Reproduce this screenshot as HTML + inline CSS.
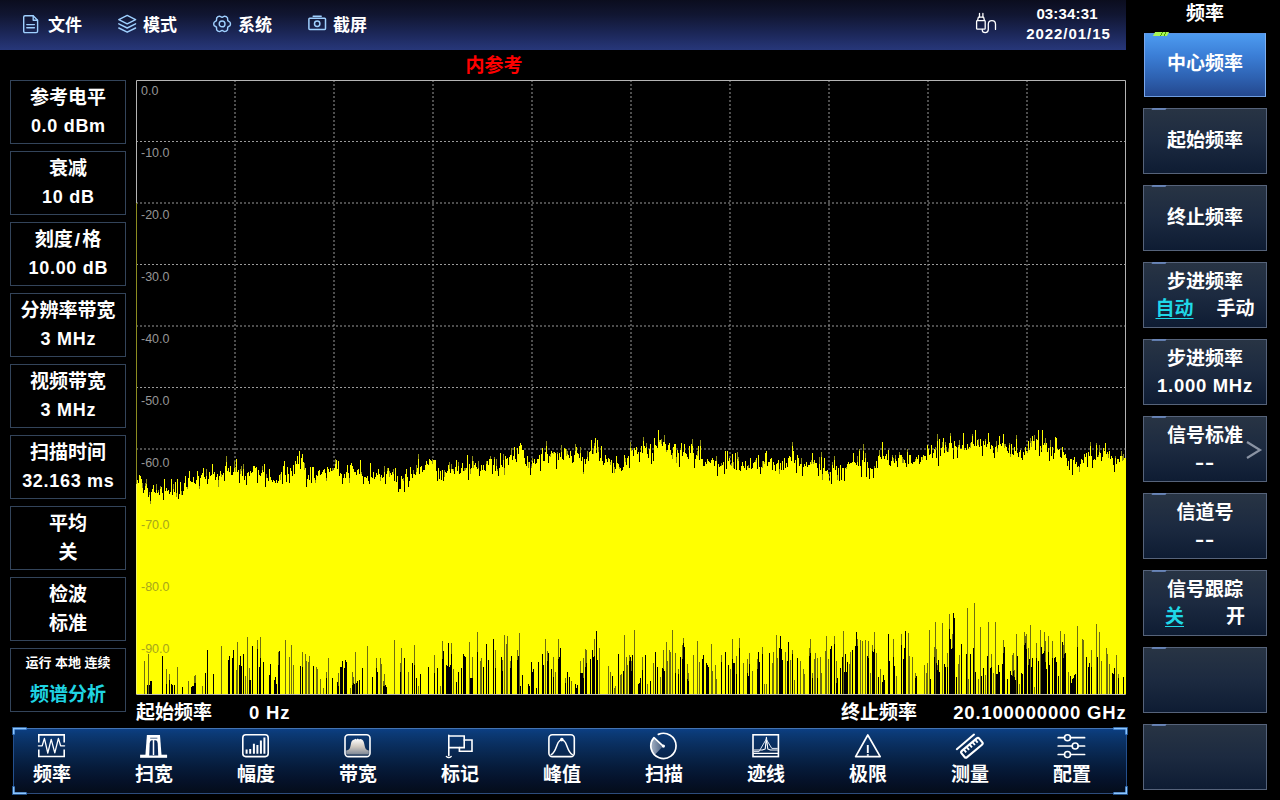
<!DOCTYPE html>
<html lang="zh-CN">
<head>
<meta charset="utf-8">
<title>频谱分析</title>
<style>
*{box-sizing:border-box;margin:0;padding:0}
html,body{width:1280px;height:800px;overflow:hidden;background:#000}
body{position:relative;font-family:"Liberation Sans","Noto Sans CJK SC",sans-serif;color:#fff;font-weight:700}
.abs{position:absolute}
/* top bar */
#topbar{position:absolute;left:0;top:0;width:1126px;height:50px;background:linear-gradient(180deg,#0b0d1e 0%,#111632 30%,#1b2656 65%,#27377a 100%)}
.menu{position:absolute;top:0;height:50px;line-height:52px;font-size:17px;font-weight:700;white-space:nowrap}
.menu svg{position:absolute;top:0;left:0}
#clock{position:absolute;left:1008px;width:120px;top:4px;text-align:center;font-size:15px;line-height:20px;font-weight:700}
#ref{position:absolute;left:434px;width:120px;top:54px;text-align:center;color:#f00;font-size:19px;line-height:24px;font-weight:700}
/* left info */
.info{position:absolute;left:10px;width:116px;height:64px;border:1px solid #33445a;text-align:center;font-size:19px;line-height:29px;padding-top:2px;white-space:nowrap}
.l{font-size:18px;letter-spacing:.7px;padding-left:.7px}
/* right panel */
#rtitle{position:absolute;left:1143px;width:124px;top:1px;height:26px;line-height:26px;text-align:center;font-size:19px}
.rb{position:absolute;left:1143px;width:124px;height:66px;border:1px solid #56637a;background:linear-gradient(180deg,#283444 0%,#1c2a40 50%,#0e1c33 100%);text-align:center;font-size:19px;line-height:27px;white-space:nowrap}
.rb.one{line-height:64px}
.rb.two{padding-top:6px;line-height:26.5px}
.rb.act{left:1144px;width:122px;height:64px;margin-top:2px;line-height:59px;background:linear-gradient(180deg,#4d9bf0 0%,#3b7ed6 35%,#2e62b2 70%,#24488e 100%);border-color:#5a94e6 #7fb0f0 #6e9ce0 #7aa8ee}
.rb i{position:absolute;left:8px;top:-1px;width:14px;height:2px;background:#6f8fc8;transform:skewX(-30deg);opacity:.8}
.rb.act i{left:9px;width:14px;height:4px;top:-2px;opacity:1;background:linear-gradient(90deg,#a8f555 0,#a8f555 7px,#4da000 7px,#4da000 8px,#a8f555 8px,#a8f555 10.5px,#4da000 10.5px,#4da000 11.5px,#a8f555 11.5px)}
.cy{color:#1fd8e8;text-decoration:underline;text-underline-offset:3px}
/* bottom */
#bbar{position:absolute;left:13px;top:728px;width:1114px;height:66px;background:linear-gradient(180deg,#0c3f84 0%,#0b3a76 7%,#0a3062 22%,#08254c 42%,#061b3a 60%,#05122a 80%,#040c1a 100%);border-top:1px solid #4474b2;border-bottom:1px solid #2d4c7c}
.bi{position:absolute;top:0;width:102px;height:66px;text-align:center;font-size:19px}
.bi span{position:absolute;left:0;width:100%;top:35px;line-height:26px}
.bi svg{position:absolute;left:35px;top:4px}
.flab{position:absolute;top:701px;height:24px;line-height:24px;font-size:19px;white-space:nowrap}
.flab.l{font-size:18.5px;letter-spacing:.8px;padding:0}
</style>
</head>
<body>
<div id="topbar"></div>

<div class="menu" style="left:23px;width:70px"><svg width="20" height="50" viewBox="0 0 20 50" fill="none" stroke="#9fd0ff" stroke-width="1.4" stroke-linejoin="round" stroke-linecap="round"><path d="M2 15.7H10.2L14.6 20.2V31.2Q14.6 32.6 13.2 32.6H2Q0.7 32.6 0.7 31.2V17Q0.7 15.7 2 15.7Z"/><path d="M10.2 15.9V20.2H14.4"/><path d="M3.8 24.6H11.4M3.8 27.8H11.4"/></svg><span style="position:absolute;left:25px">文件</span></div>
<div class="menu" style="left:118px;width:70px"><svg width="20" height="50" viewBox="0 0 20 50" fill="none" stroke="#9fd0ff" stroke-width="1.4" stroke-linejoin="round" stroke-linecap="round"><path d="M9.2 15.4L17.6 19.6L9.2 23.8L0.8 19.6Z"/><path d="M0.8 23.8L9.2 28L17.6 23.8"/><path d="M0.8 28L9.2 32.2L17.6 28"/></svg><span style="position:absolute;left:25px">模式</span></div>
<div class="menu" style="left:213px;width:70px"><svg width="20" height="50" viewBox="0 0 20 50" fill="none" stroke="#9fd0ff" stroke-width="1.4" stroke-linejoin="round" stroke-linecap="round"><path d="M17.02 22.22A3.65 3.65 0 0 1 17.02 25.58L14.73 27.15L14.52 29.92A3.65 3.65 0 0 1 11.60 31.60L9.10 30.40L6.60 31.60A3.65 3.65 0 0 1 3.68 29.92L3.47 27.15L1.18 25.58A3.65 3.65 0 0 1 1.18 22.22L3.47 20.65L3.68 17.88A3.65 3.65 0 0 1 6.60 16.20L9.10 17.40L11.60 16.20A3.65 3.65 0 0 1 14.52 17.88L14.73 20.65Z"/><circle cx="9.1" cy="23.9" r="2.9"/></svg><span style="position:absolute;left:25px">系统</span></div>
<div class="menu" style="left:308px;width:70px"><svg width="20" height="50" viewBox="0 0 20 50" fill="none" stroke="#9fd0ff" stroke-width="1.5" stroke-linejoin="round" stroke-linecap="round"><rect x="0.9" y="18.2" width="16.6" height="11.2" rx="0.8"/><path d="M5.2 16.2H13.2"/><circle cx="9.2" cy="23.8" r="2.7"/></svg><span style="position:absolute;left:25px">截屏</span></div>
<svg class="abs" style="left:974px;top:10px" width="26" height="26" viewBox="0 0 26 26" fill="none" stroke="#fff" stroke-width="1.3" stroke-linecap="round" stroke-linejoin="round"><path d="M2.6 11.4Q2.6 10.6 3.4 10.6H10.4Q11.2 10.6 11.2 11.4V18.4Q11.2 19.2 10.4 19.2H3.4Q2.6 19.2 2.6 18.4Z"/><path d="M3.6 10.4L4.4 7.2H9.6L10.4 10.4"/><path d="M5.5 7V3.4M8.9 7V3.4"/><path d="M8.3 19.4V20.2Q8.3 22.6 11.2 22.6Q14.3 22.6 14.3 19.6V14.2Q14.3 10.6 17.9 10.6Q21.5 10.6 21.5 14.2V19.4"/></svg>
<div id="clock"><div style="letter-spacing:.15px;margin-left:-2px">03:34:31</div><div style="letter-spacing:.95px;margin-left:1px">2022/01/15</div></div>

<div id="ref">内参考</div>
<div class="info" style="top:80px"><div>参考电平</div><div class="l">0.0 dBm</div></div>
<div class="info" style="top:151px"><div>衰减</div><div class="l">10 dB</div></div>
<div class="info" style="top:222px"><div>刻度<span style="padding:0 2px">/</span>格</div><div class="l">10.00 dB</div></div>
<div class="info" style="top:293px"><div>分辨率带宽</div><div class="l">3 MHz</div></div>
<div class="info" style="top:364px"><div>视频带宽</div><div class="l">3 MHz</div></div>
<div class="info" style="top:435px"><div>扫描时间</div><div class="l">32.163 ms</div></div>
<div class="info" style="top:506px"><div>平均</div><div>关</div></div>
<div class="info" style="top:577px"><div>检波</div><div>标准</div></div>
<div class="info" style="top:648px"><div style="font-size:13px;line-height:14px;margin-top:5px">运行 本地 连续</div><div style="color:#1fd4e2;font-size:19px;line-height:26px;margin-top:12px">频谱分析</div></div>

<svg class="abs" style="left:0;top:0" width="1280" height="800" viewBox="0 0 1280 800">
<g stroke="#9a9a9a" stroke-width="1" stroke-dasharray="2 2" fill="none"><path d="M136 141.5H1126"/><path d="M136 203.0H1126"/><path d="M136 264.5H1126"/><path d="M136 326.0H1126"/><path d="M136 387.5H1126"/><path d="M136 449.0H1126"/><path d="M136 510.5H1126"/><path d="M136 572.0H1126"/><path d="M136 633.5H1126"/><path d="M235.0 80V694"/><path d="M334.0 80V694"/><path d="M433.0 80V694"/><path d="M532.0 80V694"/><path d="M631.0 80V694"/><path d="M730.0 80V694"/><path d="M829.0 80V694"/><path d="M928.0 80V694"/><path d="M1027.0 80V694"/></g>
<path d="M136.5 80.5H1125.5V694.5H136.5Z" fill="none" stroke="#b4b4b4" stroke-width="1"/>
<path d="M142 487.8v-5h1v5zM145 486.4v-3h1v3zM146 484.3v-5h1v5zM149 494.7v-3h1v3zM150 503.7v-3h1v3zM156 490.0v-6h1v6zM158 492.1v-2h1v2zM160 489.1v-3h1v3zM173 488.6v-5h1v5zM176 497.3v-4h1v4zM181 494.8v-4h1v4zM187 489.4v-2h1v2zM199 488.8v-3h1v3zM206 476.2v-7h1v7zM218 486.6v-7h1v7zM221 476.8v-3h1v3zM226 461.7v-6h1v6zM234 468.4v-7h1v7zM235 471.7v-5h1v5zM240 473.7v-5h1v5zM241 470.5v-5h1v5zM243 469.2v-5h1v5zM262 469.7v-4h1v4zM266 477.9v-4h1v4zM280 480.0v-6h1v6zM304 469.7v-7h1v7zM315 482.5v-3h1v3zM326 481.3v-3h1v3zM332 470.9v-3h1v3zM335 464.0v-5h1v5zM349 482.6v-5h1v5zM361 473.9v-2h1v2zM380 480.6v-4h1v4zM384 472.0v-6h1v6zM387 471.0v-3h1v3zM389 476.9v-6h1v6zM393 473.5v-5h1v5zM403 480.5v-3h1v3zM413 473.5v-4h1v4zM416 472.2v-7h1v7zM418 458.9v-5h1v5zM432 464.4v-5h1v5zM444 476.6v-7h1v7zM449 468.8v-7h1v7zM451 469.3v-5h1v5zM453 471.0v-2h1v2zM458 466.0v-4h1v4zM464 470.5v-3h1v3zM465 470.4v-2h1v2zM470 474.0v-5h1v5zM472 460.7v-5h1v5zM473 467.7v-7h1v7zM478 468.0v-7h1v7zM486 463.8v-3h1v3zM490 459.3v-3h1v3zM494 458.5v-2h1v2zM496 465.5v-7h1v7zM497 470.6v-2h1v2zM503 460.0v-6h1v6zM504 474.9v-7h1v7zM511 454.9v-7h1v7zM528 467.7v-6h1v6zM531 468.3v-2h1v2zM532 461.3v-3h1v3zM546 445.7v-5h1v5zM550 457.4v-3h1v3zM553 453.5v-2h1v2zM557 453.6v-2h1v2zM561 452.2v-7h1v7zM566 456.2v-7h1v7zM567 454.2v-3h1v3zM575 451.3v-7h1v7zM580 452.7v-6h1v6zM583 473.8v-2h1v2zM587 456.6v-6h1v6zM593 453.8v-5h1v5zM594 446.1v-3h1v3zM598 451.8v-5h1v5zM610 465.3v-3h1v3zM614 472.5v-6h1v6zM619 469.0v-2h1v2zM625 461.8v-4h1v4zM630 447.9v-6h1v6zM631 451.3v-3h1v3zM643 440.8v-4h1v4zM646 446.7v-4h1v4zM659 441.9v-2h1v2zM661 443.6v-5h1v5zM664 441.5v-7h1v7zM666 451.8v-2h1v2zM672 459.0v-6h1v6zM676 463.2v-6h1v6zM692 446.4v-7h1v7zM697 456.0v-5h1v5zM700 446.4v-6h1v6zM716 461.0v-5h1v5zM721 466.2v-3h1v3zM731 466.1v-3h1v3zM733 467.7v-6h1v6zM737 459.4v-7h1v7zM738 461.1v-4h1v4zM748 467.5v-3h1v3zM755 462.3v-2h1v2zM762 467.9v-7h1v7zM764 463.5v-2h1v2zM779 474.0v-5h1v5zM792 445.8v-4h1v4zM801 464.1v-6h1v6zM811 463.7v-4h1v4zM813 463.9v-2h1v2zM819 464.4v-7h1v7zM821 456.7v-5h1v5zM822 479.7v-6h1v6zM832 465.1v-3h1v3zM834 459.8v-4h1v4zM837 480.3v-5h1v5zM846 469.0v-2h1v2zM857 461.8v-6h1v6zM859 451.2v-2h1v2zM863 450.9v-7h1v7zM865 457.8v-5h1v5zM874 468.2v-2h1v2zM879 455.3v-5h1v5zM892 456.6v-2h1v2zM893 461.3v-3h1v3zM895 458.8v-4h1v4zM899 454.7v-3h1v3zM902 462.9v-6h1v6zM903 462.6v-4h1v4zM907 452.3v-3h1v3zM915 461.0v-2h1v2zM922 459.9v-3h1v3zM935 450.0v-3h1v3zM937 440.9v-7h1v7zM942 447.3v-5h1v5zM945 445.3v-3h1v3zM946 450.5v-4h1v4zM948 452.0v-3h1v3zM950 436.3v-3h1v3zM958 446.9v-2h1v2zM959 445.1v-5h1v5zM970 448.1v-5h1v5zM972 435.9v-2h1v2zM978 445.4v-6h1v6zM985 441.4v-2h1v2zM996 446.3v-5h1v5zM997 452.2v-3h1v3zM1004 447.5v-4h1v4zM1005 445.7v-2h1v2zM1009 445.0v-2h1v2zM1010 456.6v-3h1v3zM1016 438.6v-4h1v4zM1027 452.7v-2h1v2zM1030 443.2v-5h1v5zM1031 447.0v-6h1v6zM1034 440.8v-6h1v6zM1045 444.9v-7h1v7zM1050 447.1v-7h1v7zM1079 472.1v-5h1v5zM1090 445.8v-4h1v4zM1096 445.0v-2h1v2zM1098 456.8v-2h1v2zM1099 451.7v-7h1v7zM1108 458.3v-4h1v4zM1115 457.7v-2h1v2zM1121 455.6v-5h1v5zM1122 460.8v-5h1v5zM1123 459.6v-6h1v6z" fill="#8c8c18" shape-rendering="crispEdges"/>
<path d="M136 694L136 480.9L137 480.9L137 480.3L138 480.3L138 483.1L139 483.1L139 474.9L140 474.9L140 475.6L141 475.6L141 478.5L142 478.5L142 487.8L143 487.8L143 492.5L144 492.5L144 490.2L145 490.2L145 486.4L146 486.4L146 484.3L147 484.3L147 487.7L148 487.7L148 497.3L149 497.3L149 494.7L150 494.7L150 503.7L151 503.7L151 491.7L152 491.7L152 488.7L153 488.7L153 485.3L154 485.3L154 491.5L155 491.5L155 492.8L156 492.8L156 490.0L157 490.0L157 493.4L158 493.4L158 492.1L159 492.1L159 494.6L160 494.6L160 489.1L161 489.1L161 487.4L162 487.4L162 492.9L163 492.9L163 500.3L164 500.3L164 479.4L165 479.4L165 490.7L166 490.7L166 488.4L167 488.4L167 491.0L168 491.0L168 489.8L169 489.8L169 494.3L170 494.3L170 491.8L171 491.8L171 479.3L172 479.3L172 494.9L173 494.9L173 488.6L174 488.6L174 492.1L175 492.1L175 481.5L176 481.5L176 497.3L177 497.3L177 479.2L178 479.2L178 498.6L179 498.6L179 494.3L180 494.3L180 481.9L181 481.9L181 494.8L182 494.8L182 494.9L183 494.9L183 491.2L184 491.2L184 482.5L185 482.5L185 476.0L186 476.0L186 487.0L187 487.0L187 489.4L188 489.4L188 477.6L189 477.6L189 471.1L190 471.1L190 480.7L191 480.7L191 482.0L192 482.0L192 481.6L193 481.6L193 476.7L194 476.7L194 483.4L195 483.4L195 483.7L196 483.7L196 480.3L197 480.3L197 470.9L198 470.9L198 475.6L199 475.6L199 488.8L200 488.8L200 478.0L201 478.0L201 474.9L202 474.9L202 472.8L203 472.8L203 468.3L204 468.3L204 477.2L205 477.2L205 478.6L206 478.6L206 476.2L207 476.2L207 483.6L208 483.6L208 478.7L209 478.7L209 472.1L210 472.1L210 475.9L211 475.9L211 474.6L212 474.6L212 464.1L213 464.1L213 473.6L214 473.6L214 472.1L215 472.1L215 480.3L216 480.3L216 477.2L217 477.2L217 473.6L218 473.6L218 486.6L219 486.6L219 476.1L220 476.1L220 470.5L221 470.5L221 476.8L222 476.8L222 474.6L223 474.6L223 473.4L224 473.4L224 480.8L225 480.8L225 465.8L226 465.8L226 461.7L227 461.7L227 470.5L228 470.5L228 467.7L229 467.7L229 472.0L230 472.0L230 465.8L231 465.8L231 474.9L232 474.9L232 475.1L233 475.1L233 471.8L234 471.8L234 468.4L235 468.4L235 471.7L236 471.7L236 458.6L237 458.6L237 472.3L238 472.3L238 470.0L239 470.0L239 483.2L240 483.2L240 473.7L241 473.7L241 470.5L242 470.5L242 475.8L243 475.8L243 469.2L244 469.2L244 479.5L245 479.5L245 475.8L246 475.8L246 485.3L247 485.3L247 473.2L248 473.2L248 471.6L249 471.6L249 476.2L250 476.2L250 471.3L251 471.3L251 473.3L252 473.3L252 472.1L253 472.1L253 465.6L254 465.6L254 465.7L255 465.7L255 467.8L256 467.8L256 467.3L257 467.3L257 482.7L258 482.7L258 469.6L259 469.6L259 474.6L260 474.6L260 475.8L261 475.8L261 473.3L262 473.3L262 469.7L263 469.7L263 472.1L264 472.1L264 464.1L265 464.1L265 486.8L266 486.8L266 477.9L267 477.9L267 478.0L268 478.0L268 480.8L269 480.8L269 468.6L270 468.6L270 477.0L271 477.0L271 479.5L272 479.5L272 482.1L273 482.1L273 479.7L274 479.7L274 480.6L275 480.6L275 482.7L276 482.7L276 480.3L277 480.3L277 483.0L278 483.0L278 481.4L279 481.4L279 474.8L280 474.8L280 480.0L281 480.0L281 471.7L282 471.7L282 483.5L283 483.5L283 465.6L284 465.6L284 461.1L285 461.1L285 474.6L286 474.6L286 482.4L287 482.4L287 466.6L288 466.6L288 473.5L289 473.5L289 482.7L290 482.7L290 468.0L291 468.0L291 470.5L292 470.5L292 476.3L293 476.3L293 464.9L294 464.9L294 474.1L295 474.1L295 460.8L296 460.8L296 464.0L297 464.0L297 455.8L298 455.8L298 464.4L299 464.4L299 451.2L300 451.2L300 469.1L301 469.1L301 457.5L302 457.5L302 453.7L303 453.7L303 462.4L304 462.4L304 469.7L305 469.7L305 467.6L306 467.6L306 487.3L307 487.3L307 479.1L308 479.1L308 475.0L309 475.0L309 480.0L310 480.0L310 467.3L311 467.3L311 482.7L312 482.7L312 467.3L313 467.3L313 466.9L314 466.9L314 477.6L315 477.6L315 482.5L316 482.5L316 475.0L317 475.0L317 475.6L318 475.6L318 470.9L319 470.9L319 470.2L320 470.2L320 475.2L321 475.2L321 474.2L322 474.2L322 472.3L323 472.3L323 469.9L324 469.9L324 469.0L325 469.0L325 472.9L326 472.9L326 481.3L327 481.3L327 467.1L328 467.1L328 469.1L329 469.1L329 471.8L330 471.8L330 468.0L331 468.0L331 471.3L332 471.3L332 470.9L333 470.9L333 470.0L334 470.0L334 468.3L335 468.3L335 464.0L336 464.0L336 460.0L337 460.0L337 469.3L338 469.3L338 461.0L339 461.0L339 475.6L340 475.6L340 472.7L341 472.7L341 474.4L342 474.4L342 484.0L343 484.0L343 478.4L344 478.4L344 474.4L345 474.4L345 477.9L346 477.9L346 472.1L347 472.1L347 464.6L348 464.6L348 472.9L349 472.9L349 482.6L350 482.6L350 464.7L351 464.7L351 463.4L352 463.4L352 466.1L353 466.1L353 469.1L354 469.1L354 471.5L355 471.5L355 472.4L356 472.4L356 474.7L357 474.7L357 470.0L358 470.0L358 468.7L359 468.7L359 473.5L360 473.5L360 460.3L361 460.3L361 473.9L362 473.9L362 475.9L363 475.9L363 483.6L364 483.6L364 476.7L365 476.7L365 476.9L366 476.9L366 477.8L367 477.8L367 476.3L368 476.3L368 480.7L369 480.7L369 483.9L370 483.9L370 463.3L371 463.3L371 476.9L372 476.9L372 477.7L373 477.7L373 471.9L374 471.9L374 478.9L375 478.9L375 477.3L376 477.3L376 473.0L377 473.0L377 474.5L378 474.5L378 469.0L379 469.0L379 473.8L380 473.8L380 480.6L381 480.6L381 475.1L382 475.1L382 477.7L383 477.7L383 477.0L384 477.0L384 472.0L385 472.0L385 483.5L386 483.5L386 473.8L387 473.8L387 471.0L388 471.0L388 467.6L389 467.6L389 476.9L390 476.9L390 473.1L391 473.1L391 475.1L392 475.1L392 472.4L393 472.4L393 473.5L394 473.5L394 480.5L395 480.5L395 467.8L396 467.8L396 481.6L397 481.6L397 475.7L398 475.7L398 492.2L399 492.2L399 489.3L400 489.3L400 489.2L401 489.2L401 475.6L402 475.6L402 478.9L403 478.9L403 480.5L404 480.5L404 492.2L405 492.2L405 474.2L406 474.2L406 469.0L407 469.0L407 476.5L408 476.5L408 486.8L409 486.8L409 481.2L410 481.2L410 466.5L411 466.5L411 473.7L412 473.7L412 478.2L413 478.2L413 473.5L414 473.5L414 473.6L415 473.6L415 474.5L416 474.5L416 472.2L417 472.2L417 467.9L418 467.9L418 458.9L419 458.9L419 474.1L420 474.1L420 467.2L421 467.2L421 465.7L422 465.7L422 471.7L423 471.7L423 469.5L424 469.5L424 469.6L425 469.6L425 465.4L426 465.4L426 460.5L427 460.5L427 463.8L428 463.8L428 465.1L429 465.1L429 459.3L430 459.3L430 459.6L431 459.6L431 461.2L432 461.2L432 464.4L433 464.4L433 459.6L434 459.6L434 459.6L435 459.6L435 460.0L436 460.0L436 471.2L437 471.2L437 481.2L438 481.2L438 468.2L439 468.2L439 478.5L440 478.5L440 470.6L441 470.6L441 480.0L442 480.0L442 469.8L443 469.8L443 481.1L444 481.1L444 476.6L445 476.6L445 472.1L446 472.1L446 472.9L447 472.9L447 471.1L448 471.1L448 464.6L449 464.6L449 468.8L450 468.8L450 473.2L451 473.2L451 469.3L452 469.3L452 469.4L453 469.4L453 471.0L454 471.0L454 474.4L455 474.4L455 466.8L456 466.8L456 459.7L457 459.7L457 470.5L458 470.5L458 466.0L459 466.0L459 474.2L460 474.2L460 473.4L461 473.4L461 467.7L462 467.7L462 462.8L463 462.8L463 470.6L464 470.6L464 470.5L465 470.5L465 470.4L466 470.4L466 468.0L467 468.0L467 455.2L468 455.2L468 480.3L469 480.3L469 464.2L470 464.2L470 474.0L471 474.0L471 468.3L472 468.3L472 460.7L473 460.7L473 467.7L474 467.7L474 464.8L475 464.8L475 463.1L476 463.1L476 467.4L477 467.4L477 469.3L478 469.3L478 468.0L479 468.0L479 476.2L480 476.2L480 470.6L481 470.6L481 464.7L482 464.7L482 469.7L483 469.7L483 465.0L484 465.0L484 470.2L485 470.2L485 471.3L486 471.3L486 463.8L487 463.8L487 460.9L488 460.9L488 464.9L489 464.9L489 459.2L490 459.2L490 459.3L491 459.3L491 458.7L492 458.7L492 473.5L493 473.5L493 465.3L494 465.3L494 458.5L495 458.5L495 470.7L496 470.7L496 465.5L497 465.5L497 470.6L498 470.6L498 475.9L499 475.9L499 467.7L500 467.7L500 453.2L501 453.2L501 465.4L502 465.4L502 466.5L503 466.5L503 460.0L504 460.0L504 474.9L505 474.9L505 456.3L506 456.3L506 458.9L507 458.9L507 458.0L508 458.0L508 464.5L509 464.5L509 457.2L510 457.2L510 454.6L511 454.6L511 454.9L512 454.9L512 459.9L513 459.9L513 455.9L514 455.9L514 446.7L515 446.7L515 458.5L516 458.5L516 462.3L517 462.3L517 448.0L518 448.0L518 453.8L519 453.8L519 445.6L520 445.6L520 442.5L521 442.5L521 445.1L522 445.1L522 449.6L523 449.6L523 449.5L524 449.5L524 458.1L525 458.1L525 464.4L526 464.4L526 466.0L527 466.0L527 455.7L528 455.7L528 467.7L529 467.7L529 461.5L530 461.5L530 474.8L531 474.8L531 468.3L532 468.3L532 461.3L533 461.3L533 462.7L534 462.7L534 459.1L535 459.1L535 463.6L536 463.6L536 463.3L537 463.3L537 458.7L538 458.7L538 458.5L539 458.5L539 455.4L540 455.4L540 470.8L541 470.8L541 454.1L542 454.1L542 447.5L543 447.5L543 461.2L544 461.2L544 460.7L545 460.7L545 452.0L546 452.0L546 445.7L547 445.7L547 454.1L548 454.1L548 463.3L549 463.3L549 455.7L550 455.7L550 457.4L551 457.4L551 451.0L552 451.0L552 452.7L553 452.7L553 453.5L554 453.5L554 452.1L555 452.1L555 452.6L556 452.6L556 468.5L557 468.5L557 453.6L558 453.6L558 459.8L559 459.8L559 453.0L560 453.0L560 457.0L561 457.0L561 452.2L562 452.2L562 458.7L563 458.7L563 459.7L564 459.7L564 448.0L565 448.0L565 448.7L566 448.7L566 456.2L567 456.2L567 454.2L568 454.2L568 454.7L569 454.7L569 457.5L570 457.5L570 451.3L571 451.3L571 455.7L572 455.7L572 463.3L573 463.3L573 461.7L574 461.7L574 455.1L575 455.1L575 451.3L576 451.3L576 446.9L577 446.9L577 453.2L578 453.2L578 454.3L579 454.3L579 458.4L580 458.4L580 452.7L581 452.7L581 460.5L582 460.5L582 457.3L583 457.3L583 473.8L584 473.8L584 458.9L585 458.9L585 463.7L586 463.7L586 459.1L587 459.1L587 456.6L588 456.6L588 460.6L589 460.6L589 452.3L590 452.3L590 451.2L591 451.2L591 440.0L592 440.0L592 454.4L593 454.4L593 453.8L594 453.8L594 446.1L595 446.1L595 438.1L596 438.1L596 452.9L597 452.9L597 440.0L598 440.0L598 451.8L599 451.8L599 461.0L600 461.0L600 458.1L601 458.1L601 446.1L602 446.1L602 461.0L603 461.0L603 464.6L604 464.6L604 462.9L605 462.9L605 455.2L606 455.2L606 458.8L607 458.8L607 461.5L608 461.5L608 457.9L609 457.9L609 459.1L610 459.1L610 465.3L611 465.3L611 459.9L612 459.9L612 472.5L613 472.5L613 463.0L614 463.0L614 472.5L615 472.5L615 469.1L616 469.1L616 456.3L617 456.3L617 462.8L618 462.8L618 464.3L619 464.3L619 469.0L620 469.0L620 467.5L621 467.5L621 470.7L622 470.7L622 470.0L623 470.0L623 466.5L624 466.5L624 455.2L625 455.2L625 461.8L626 461.8L626 465.2L627 465.2L627 458.4L628 458.4L628 456.3L629 456.3L629 467.7L630 467.7L630 447.9L631 447.9L631 451.3L632 451.3L632 450.2L633 450.2L633 455.6L634 455.6L634 448.3L635 448.3L635 450.3L636 450.3L636 447.3L637 447.3L637 454.2L638 454.2L638 451.7L639 451.7L639 462.3L640 462.3L640 452.4L641 452.4L641 445.5L642 445.5L642 452.7L643 452.7L643 440.8L644 440.8L644 446.3L645 446.3L645 447.6L646 447.6L646 446.7L647 446.7L647 454.0L648 454.0L648 458.3L649 458.3L649 449.1L650 449.1L650 444.0L651 444.0L651 464.0L652 464.0L652 452.8L653 452.8L653 460.9L654 460.9L654 437.7L655 437.7L655 445.2L656 445.2L656 446.1L657 446.1L657 448.1L658 448.1L658 430.4L659 430.4L659 441.9L660 441.9L660 439.9L661 439.9L661 443.6L662 443.6L662 446.2L663 446.2L663 441.8L664 441.8L664 441.5L665 441.5L665 444.3L666 444.3L666 451.8L667 451.8L667 449.8L668 449.8L668 444.7L669 444.7L669 443.4L670 443.4L670 450.4L671 450.4L671 454.8L672 454.8L672 459.0L673 459.0L673 447.4L674 447.4L674 443.6L675 443.6L675 443.8L676 443.8L676 463.2L677 463.2L677 450.0L678 450.0L678 452.7L679 452.7L679 467.1L680 467.1L680 450.2L681 450.2L681 443.0L682 443.0L682 456.4L683 456.4L683 452.0L684 452.0L684 443.7L685 443.7L685 453.2L686 453.2L686 454.3L687 454.3L687 457.1L688 457.1L688 458.9L689 458.9L689 445.8L690 445.8L690 453.4L691 453.4L691 444.3L692 444.3L692 446.4L693 446.4L693 453.4L694 453.4L694 467.9L695 467.9L695 458.5L696 458.5L696 454.6L697 454.6L697 456.0L698 456.0L698 445.5L699 445.5L699 460.3L700 460.3L700 446.4L701 446.4L701 458.7L702 458.7L702 458.9L703 458.9L703 466.0L704 466.0L704 465.7L705 465.7L705 462.4L706 462.4L706 463.6L707 463.6L707 458.7L708 458.7L708 460.5L709 460.5L709 461.6L710 461.6L710 463.0L711 463.0L711 459.5L712 459.5L712 457.7L713 457.7L713 459.8L714 459.8L714 466.3L715 466.3L715 460.8L716 460.8L716 461.0L717 461.0L717 476.3L718 476.3L718 464.4L719 464.4L719 467.1L720 467.1L720 466.0L721 466.0L721 466.2L722 466.2L722 465.1L723 465.1L723 461.5L724 461.5L724 474.4L725 474.4L725 450.6L726 450.6L726 469.2L727 469.2L727 450.7L728 450.7L728 460.5L729 460.5L729 458.0L730 458.0L730 465.1L731 465.1L731 466.1L732 466.1L732 454.2L733 454.2L733 467.7L734 467.7L734 468.8L735 468.8L735 453.2L736 453.2L736 470.1L737 470.1L737 459.4L738 459.4L738 461.1L739 461.1L739 470.1L740 470.1L740 470.7L741 470.7L741 466.3L742 466.3L742 462.3L743 462.3L743 466.3L744 466.3L744 468.0L745 468.0L745 460.8L746 460.8L746 470.0L747 470.0L747 466.2L748 466.2L748 467.5L749 467.5L749 468.2L750 468.2L750 458.0L751 458.0L751 469.0L752 469.0L752 468.1L753 468.1L753 463.4L754 463.4L754 461.9L755 461.9L755 462.3L756 462.3L756 457.9L757 457.9L757 469.1L758 469.1L758 455.2L759 455.2L759 467.1L760 467.1L760 474.2L761 474.2L761 467.0L762 467.0L762 467.9L763 467.9L763 461.1L764 461.1L764 463.5L765 463.5L765 452.7L766 452.7L766 451.3L767 451.3L767 465.5L768 465.5L768 461.5L769 461.5L769 461.6L770 461.6L770 458.7L771 458.7L771 457.9L772 457.9L772 469.9L773 469.9L773 461.9L774 461.9L774 465.2L775 465.2L775 471.2L776 471.2L776 463.7L777 463.7L777 462.6L778 462.6L778 459.5L779 459.5L779 474.0L780 474.0L780 463.0L781 463.0L781 470.1L782 470.1L782 461.2L783 461.2L783 470.0L784 470.0L784 457.8L785 457.8L785 468.3L786 468.3L786 463.0L787 463.0L787 466.7L788 466.7L788 458.0L789 458.0L789 456.4L790 456.4L790 456.5L791 456.5L791 461.2L792 461.2L792 445.8L793 445.8L793 451.0L794 451.0L794 462.9L795 462.9L795 460.2L796 460.2L796 472.6L797 472.6L797 454.8L798 454.8L798 458.4L799 458.4L799 465.8L800 465.8L800 463.8L801 463.8L801 464.1L802 464.1L802 475.9L803 475.9L803 466.9L804 466.9L804 463.8L805 463.8L805 466.4L806 466.4L806 461.5L807 461.5L807 467.1L808 467.1L808 465.2L809 465.2L809 464.7L810 464.7L810 462.4L811 462.4L811 463.7L812 463.7L812 453.4L813 453.4L813 463.9L814 463.9L814 460.3L815 460.3L815 462.7L816 462.7L816 462.9L817 462.9L817 468.2L818 468.2L818 476.2L819 476.2L819 464.4L820 464.4L820 470.3L821 470.3L821 456.7L822 456.7L822 479.7L823 479.7L823 467.9L824 467.9L824 458.2L825 458.2L825 470.8L826 470.8L826 470.7L827 470.7L827 470.2L828 470.2L828 473.8L829 473.8L829 481.3L830 481.3L830 471.8L831 471.8L831 483.6L832 483.6L832 465.1L833 465.1L833 468.0L834 468.0L834 459.8L835 459.8L835 470.3L836 470.3L836 466.2L837 466.2L837 480.3L838 480.3L838 468.2L839 468.2L839 480.5L840 480.5L840 465.0L841 465.0L841 479.9L842 479.9L842 468.4L843 468.4L843 467.6L844 467.6L844 480.9L845 480.9L845 467.7L846 467.7L846 469.0L847 469.0L847 464.0L848 464.0L848 462.2L849 462.2L849 464.0L850 464.0L850 462.9L851 462.9L851 462.5L852 462.5L852 461.6L853 461.6L853 452.9L854 452.9L854 461.6L855 461.6L855 463.4L856 463.4L856 464.5L857 464.5L857 461.8L858 461.8L858 466.4L859 466.4L859 451.2L860 451.2L860 466.1L861 466.1L861 476.7L862 476.7L862 459.5L863 459.5L863 450.9L864 450.9L864 462.0L865 462.0L865 457.8L866 457.8L866 477.1L867 477.1L867 461.6L868 461.6L868 467.6L869 467.6L869 478.6L870 478.6L870 467.8L871 467.8L871 469.0L872 469.0L872 468.7L873 468.7L873 477.6L874 477.6L874 468.2L875 468.2L875 467.9L876 467.9L876 460.9L877 460.9L877 468.3L878 468.3L878 456.0L879 456.0L879 455.3L880 455.3L880 457.0L881 457.0L881 458.8L882 458.8L882 441.8L883 441.8L883 455.6L884 455.6L884 459.1L885 459.1L885 456.3L886 456.3L886 454.2L887 454.2L887 460.2L888 460.2L888 449.6L889 449.6L889 464.9L890 464.9L890 466.3L891 466.3L891 461.3L892 461.3L892 456.6L893 456.6L893 461.3L894 461.3L894 462.9L895 462.9L895 458.8L896 458.8L896 460.8L897 460.8L897 467.2L898 467.2L898 457.7L899 457.7L899 454.7L900 454.7L900 455.1L901 455.1L901 455.3L902 455.3L902 462.9L903 462.9L903 462.6L904 462.6L904 459.7L905 459.7L905 463.4L906 463.4L906 466.6L907 466.6L907 452.3L908 452.3L908 463.6L909 463.6L909 454.8L910 454.8L910 455.3L911 455.3L911 462.8L912 462.8L912 464.0L913 464.0L913 462.0L914 462.0L914 461.7L915 461.7L915 461.0L916 461.0L916 457.1L917 457.1L917 458.9L918 458.9L918 455.3L919 455.3L919 464.3L920 464.3L920 461.7L921 461.7L921 456.5L922 456.5L922 459.9L923 459.9L923 454.7L924 454.7L924 455.8L925 455.8L925 455.6L926 455.6L926 459.7L927 459.7L927 445.4L928 445.4L928 448.6L929 448.6L929 455.4L930 455.4L930 453.9L931 453.9L931 445.4L932 445.4L932 457.6L933 457.6L933 453.1L934 453.1L934 449.3L935 449.3L935 450.0L936 450.0L936 457.9L937 457.9L937 440.9L938 440.9L938 465.7L939 465.7L939 438.7L940 438.7L940 456.4L941 456.4L941 448.1L942 448.1L942 447.3L943 447.3L943 438.0L944 438.0L944 452.6L945 452.6L945 445.3L946 445.3L946 450.5L947 450.5L947 452.1L948 452.1L948 452.0L949 452.0L949 443.0L950 443.0L950 436.3L951 436.3L951 442.8L952 442.8L952 448.3L953 448.3L953 459.0L954 459.0L954 441.4L955 441.4L955 445.7L956 445.7L956 446.8L957 446.8L957 458.1L958 458.1L958 446.9L959 446.9L959 445.1L960 445.1L960 448.6L961 448.6L961 448.8L962 448.8L962 444.5L963 444.5L963 433.3L964 433.3L964 449.7L965 449.7L965 448.0L966 448.0L966 449.5L967 449.5L967 444.3L968 444.3L968 449.0L969 449.0L969 446.7L970 446.7L970 448.1L971 448.1L971 442.0L972 442.0L972 435.9L973 435.9L973 443.8L974 443.8L974 446.0L975 446.0L975 429.8L976 429.8L976 445.5L977 445.5L977 440.4L978 440.4L978 445.4L979 445.4L979 446.5L980 446.5L980 439.3L981 439.3L981 445.9L982 445.9L982 455.7L983 455.7L983 441.2L984 441.2L984 445.4L985 445.4L985 441.4L986 441.4L986 446.5L987 446.5L987 444.0L988 444.0L988 432.6L989 432.6L989 442.4L990 442.4L990 448.6L991 448.6L991 445.4L992 445.4L992 446.2L993 446.2L993 452.8L994 452.8L994 457.6L995 457.6L995 446.5L996 446.5L996 446.3L997 446.3L997 452.2L998 452.2L998 445.4L999 445.4L999 436.1L1000 436.1L1000 443.8L1001 443.8L1001 445.7L1002 445.7L1002 442.9L1003 442.9L1003 434.0L1004 434.0L1004 447.5L1005 447.5L1005 445.7L1006 445.7L1006 447.3L1007 447.3L1007 450.8L1008 450.8L1008 452.9L1009 452.9L1009 445.0L1010 445.0L1010 456.6L1011 456.6L1011 444.0L1012 444.0L1012 453.6L1013 453.6L1013 454.6L1014 454.6L1014 447.1L1015 447.1L1015 450.5L1016 450.5L1016 438.6L1017 438.6L1017 452.7L1018 452.7L1018 456.6L1019 456.6L1019 451.9L1020 451.9L1020 450.2L1021 450.2L1021 458.1L1022 458.1L1022 459.8L1023 459.8L1023 451.5L1024 451.5L1024 455.4L1025 455.4L1025 446.5L1026 446.5L1026 451.4L1027 451.4L1027 452.7L1028 452.7L1028 440.6L1029 440.6L1029 450.1L1030 450.1L1030 443.2L1031 443.2L1031 447.0L1032 447.0L1032 436.3L1033 436.3L1033 440.7L1034 440.7L1034 440.8L1035 440.8L1035 450.3L1036 450.3L1036 438.8L1037 438.8L1037 440.2L1038 440.2L1038 429.7L1039 429.7L1039 456.2L1040 456.2L1040 445.5L1041 445.5L1041 452.2L1042 452.2L1042 430.3L1043 430.3L1043 445.0L1044 445.0L1044 443.1L1045 443.1L1045 444.9L1046 444.9L1046 442.5L1047 442.5L1047 452.4L1048 452.4L1048 447.5L1049 447.5L1049 460.8L1050 460.8L1050 447.1L1051 447.1L1051 456.3L1052 456.3L1052 447.3L1053 447.3L1053 459.2L1054 459.2L1054 453.4L1055 453.4L1055 436.9L1056 436.9L1056 438.0L1057 438.0L1057 448.5L1058 448.5L1058 449.6L1059 449.6L1059 449.3L1060 449.3L1060 457.4L1061 457.4L1061 457.8L1062 457.8L1062 447.2L1063 447.2L1063 452.0L1064 452.0L1064 455.1L1065 455.1L1065 453.6L1066 453.6L1066 457.6L1067 457.6L1067 465.5L1068 465.5L1068 460.7L1069 460.7L1069 470.4L1070 470.4L1070 459.0L1071 459.0L1071 458.7L1072 458.7L1072 474.9L1073 474.9L1073 460.3L1074 460.3L1074 457.3L1075 457.3L1075 464.0L1076 464.0L1076 461.9L1077 461.9L1077 466.9L1078 466.9L1078 466.2L1079 466.2L1079 472.1L1080 472.1L1080 463.7L1081 463.7L1081 459.0L1082 459.0L1082 460.0L1083 460.0L1083 463.3L1084 463.3L1084 454.1L1085 454.1L1085 456.8L1086 456.8L1086 453.4L1087 453.4L1087 467.0L1088 467.0L1088 451.5L1089 451.5L1089 455.9L1090 455.9L1090 445.8L1091 445.8L1091 456.1L1092 456.1L1092 468.4L1093 468.4L1093 460.3L1094 460.3L1094 459.4L1095 459.4L1095 460.3L1096 460.3L1096 445.0L1097 445.0L1097 457.0L1098 457.0L1098 456.8L1099 456.8L1099 451.7L1100 451.7L1100 453.0L1101 453.0L1101 461.4L1102 461.4L1102 457.4L1103 457.4L1103 447.7L1104 447.7L1104 450.8L1105 450.8L1105 442.7L1106 442.7L1106 454.3L1107 454.3L1107 451.7L1108 451.7L1108 458.3L1109 458.3L1109 451.0L1110 451.0L1110 458.6L1111 458.6L1111 456.3L1112 456.3L1112 457.6L1113 457.6L1113 465.2L1114 465.2L1114 472.0L1115 472.0L1115 457.7L1116 457.7L1116 464.1L1117 464.1L1117 458.8L1118 458.8L1118 459.2L1119 459.2L1119 462.3L1120 462.3L1120 456.2L1121 456.2L1121 455.6L1122 455.6L1122 460.8L1123 460.8L1123 459.6L1124 459.6L1124 458.4L1125 458.4L1125 458.4L1126 458.4L1126 694Z" fill="#ffff00" shape-rendering="crispEdges"/>
<path d="M147 694v-9h1v9zM148 694v-9h1v9zM149 694v-9h1v9zM150 694v-13h1v13zM151 694v-13h1v13zM162 694v-38h1v38zM166 694v-10h1v10zM169 694v-14h1v14zM171 694v-10h1v10zM172 694v-9h1v9zM174 694v-9h1v9zM182 694v-7h1v7zM191 694v-7h1v7zM192 694v-8h1v8zM193 694v-8h1v8zM194 694v-11h1v11zM195 694v-11h1v11zM205 694v-21h1v21zM207 694v-44h1v44zM213 694v-20h1v20zM228 694v-34h1v34zM229 694v-38h1v38zM232 694v-36h1v36zM233 694v-44h1v44zM239 694v-29h1v29zM240 694v-38h1v38zM241 694v-28h1v28zM243 694v-40h1v40zM247 694v-29h1v29zM249 694v-14h1v14zM250 694v-14h1v14zM252 694v-48h1v48zM257 694v-45h1v45zM259 694v-27h1v27zM260 694v-36h1v36zM263 694v-32h1v32zM269 694v-19h1v19zM270 694v-30h1v30zM274 694v-14h1v14zM275 694v-17h1v17zM276 694v-10h1v10zM278 694v-29h1v29zM279 694v-43h1v43zM285 694v-14h1v14zM300 694v-28h1v28zM302 694v-27h1v27zM313 694v-28h1v28zM326 694v-16h1v16zM332 694v-16h1v16zM337 694v-12h1v12zM338 694v-8h1v8zM340 694v-27h1v27zM341 694v-27h1v27zM342 694v-33h1v33zM344 694v-26h1v26zM345 694v-34h1v34zM346 694v-32h1v32zM352 694v-9h1v9zM353 694v-11h1v11zM354 694v-10h1v10zM355 694v-8h1v8zM356 694v-11h1v11zM357 694v-13h1v13zM359 694v-14h1v14zM362 694v-26h1v26zM372 694v-17h1v17zM376 694v-26h1v26zM377 694v-22h1v22zM383 694v-8h1v8zM384 694v-8h1v8zM385 694v-9h1v9zM386 694v-7h1v7zM394 694v-25h1v25zM400 694v-22h1v22zM404 694v-36h1v36zM412 694v-31h1v31zM414 694v-29h1v29zM416 694v-16h1v16zM420 694v-20h1v20zM428 694v-27h1v27zM434 694v-21h1v21zM437 694v-26h1v26zM442 694v-35h1v35zM443 694v-43h1v43zM446 694v-29h1v29zM447 694v-28h1v28zM448 694v-51h1v51zM449 694v-27h1v27zM450 694v-29h1v29zM451 694v-40h1v40zM456 694v-12h1v12zM458 694v-22h1v22zM461 694v-26h1v26zM463 694v-40h1v40zM464 694v-38h1v38zM465 694v-37h1v37zM470 694v-16h1v16zM471 694v-16h1v16zM472 694v-16h1v16zM477 694v-42h1v42zM483 694v-27h1v27zM486 694v-50h1v50zM488 694v-34h1v34zM493 694v-55h1v55zM495 694v-26h1v26zM501 694v-37h1v37zM502 694v-23h1v23zM504 694v-21h1v21zM510 694v-26h1v26zM511 694v-38h1v38zM517 694v-34h1v34zM518 694v-38h1v38zM520 694v-8h1v8zM522 694v-19h1v19zM528 694v-10h1v10zM529 694v-8h1v8zM531 694v-32h1v32zM532 694v-22h1v22zM533 694v-25h1v25zM536 694v-6h1v6zM538 694v-32h1v32zM542 694v-40h1v40zM543 694v-29h1v29zM547 694v-33h1v33zM548 694v-41h1v41zM551 694v-25h1v25zM553 694v-17h1v17zM558 694v-35h1v35zM559 694v-37h1v37zM560 694v-46h1v46zM565 694v-11h1v11zM567 694v-22h1v22zM569 694v-17h1v17zM575 694v-10h1v10zM576 694v-6h1v6zM577 694v-9h1v9zM580 694v-21h1v21zM581 694v-21h1v21zM582 694v-21h1v21zM583 694v-16h1v16zM585 694v-27h1v27zM586 694v-31h1v31zM590 694v-35h1v35zM592 694v-44h1v44zM593 694v-37h1v37zM594 694v-38h1v38zM596 694v-63h1v63zM597 694v-34h1v34zM612 694v-18h1v18zM618 694v-40h1v40zM623 694v-23h1v23zM629 694v-33h1v33zM630 694v-37h1v37zM631 694v-23h1v23zM632 694v-39h1v39zM634 694v-42h1v42zM638 694v-10h1v10zM639 694v-11h1v11zM640 694v-16h1v16zM642 694v-24h1v24zM645 694v-39h1v39zM650 694v-13h1v13zM655 694v-42h1v42zM657 694v-27h1v27zM662 694v-26h1v26zM663 694v-25h1v25zM664 694v-23h1v23zM675 694v-21h1v21zM678 694v-20h1v20zM680 694v-37h1v37zM682 694v-35h1v35zM683 694v-51h1v51zM684 694v-47h1v47zM687 694v-15h1v15zM688 694v-13h1v13zM702 694v-35h1v35zM703 694v-39h1v39zM706 694v-31h1v31zM707 694v-29h1v29zM708 694v-27h1v27zM721 694v-32h1v32zM725 694v-42h1v42zM728 694v-29h1v29zM732 694v-35h1v35zM733 694v-31h1v31zM734 694v-31h1v31zM736 694v-20h1v20zM739 694v-46h1v46zM747 694v-21h1v21zM748 694v-18h1v18zM749 694v-30h1v30zM757 694v-25h1v25zM758 694v-42h1v42zM759 694v-32h1v32zM762 694v-40h1v40zM769 694v-41h1v41zM779 694v-46h1v46zM780 694v-58h1v58zM781 694v-45h1v45zM782 694v-34h1v34zM787 694v-33h1v33zM788 694v-52h1v52zM792 694v-40h1v40zM797 694v-36h1v36zM809 694v-38h1v38zM810 694v-41h1v41zM812 694v-16h1v16zM817 694v-16h1v16zM830 694v-45h1v45zM831 694v-48h1v48zM834 694v-50h1v50zM836 694v-11h1v11zM837 694v-16h1v16zM840 694v-26h1v26zM842 694v-37h1v37zM843 694v-37h1v37zM844 694v-22h1v22zM845 694v-40h1v40zM846 694v-22h1v22zM847 694v-32h1v32zM852 694v-44h1v44zM855 694v-48h1v48zM856 694v-62h1v62zM857 694v-48h1v48zM867 694v-38h1v38zM868 694v-36h1v36zM872 694v-43h1v43zM873 694v-42h1v42zM874 694v-45h1v45zM878 694v-17h1v17zM882 694v-12h1v12zM883 694v-19h1v19zM884 694v-14h1v14zM888 694v-60h1v60zM889 694v-33h1v33zM893 694v-37h1v37zM894 694v-28h1v28zM901 694v-49h1v49zM903 694v-35h1v35zM904 694v-46h1v46zM905 694v-63h1v63zM915 694v-16h1v16zM916 694v-18h1v18zM929 694v-16h1v16zM930 694v-15h1v15zM934 694v-37h1v37zM935 694v-23h1v23zM936 694v-31h1v31zM937 694v-24h1v24zM938 694v-34h1v34zM939 694v-22h1v22zM944 694v-30h1v30zM945 694v-27h1v27zM947 694v-27h1v27zM949 694v-65h1v65zM950 694v-55h1v55zM951 694v-45h1v45zM952 694v-46h1v46zM953 694v-81h1v81zM954 694v-76h1v76zM956 694v-17h1v17zM961 694v-50h1v50zM966 694v-40h1v40zM970 694v-40h1v40zM973 694v-46h1v46zM975 694v-22h1v22zM981 694v-18h1v18zM983 694v-26h1v26zM987 694v-38h1v38zM990 694v-26h1v26zM991 694v-27h1v27zM996 694v-20h1v20zM997 694v-20h1v20zM998 694v-29h1v29zM999 694v-22h1v22zM1002 694v-30h1v30zM1003 694v-41h1v41zM1004 694v-47h1v47zM1007 694v-15h1v15zM1010 694v-23h1v23zM1011 694v-19h1v19zM1012 694v-18h1v18zM1013 694v-23h1v23zM1014 694v-17h1v17zM1015 694v-14h1v14zM1017 694v-38h1v38zM1021 694v-21h1v21zM1022 694v-20h1v20zM1024 694v-49h1v49zM1025 694v-51h1v51zM1026 694v-45h1v45zM1028 694v-29h1v29zM1029 694v-35h1v35zM1030 694v-33h1v33zM1031 694v-27h1v27zM1032 694v-36h1v36zM1036 694v-36h1v36zM1038 694v-33h1v33zM1041 694v-47h1v47zM1042 694v-40h1v40zM1043 694v-41h1v41zM1044 694v-43h1v43zM1045 694v-32h1v32zM1046 694v-25h1v25zM1048 694v-42h1v42zM1049 694v-29h1v29zM1052 694v-36h1v36zM1054 694v-36h1v36zM1055 694v-37h1v37zM1056 694v-32h1v32zM1058 694v-18h1v18zM1060 694v-16h1v16zM1062 694v-52h1v52zM1063 694v-36h1v36zM1064 694v-40h1v40zM1065 694v-41h1v41zM1070 694v-18h1v18zM1071 694v-11h1v11zM1072 694v-15h1v15zM1073 694v-16h1v16zM1074 694v-19h1v19zM1075 694v-20h1v20zM1077 694v-47h1v47zM1086 694v-37h1v37zM1088 694v-27h1v27zM1089 694v-31h1v31zM1091 694v-27h1v27zM1097 694v-37h1v37zM1112 694v-21h1v21zM1113 694v-20h1v20zM1114 694v-26h1v26zM1118 694v-16h1v16zM1123 694v-17h1v17zM967 694v-51h1v51zM974 694v-54h1v54zM980 694v-48h1v48zM988 694v-53h1v53zM995 694v-47h1v47zM935 694v-34h1v34zM929 694v-29h1v29zM1016 694v-35h1v35zM1030 694v-42h1v42zM1040 694v-37h1v37zM1060 694v-28h1v28zM1096 694v-37h1v37zM843 694v-36h1v36zM860 694v-25h1v25zM504 694v-26h1v26zM519 694v-37h1v37zM545 694v-27h1v27zM634 694v-35h1v35zM672 694v-32h1v32zM624 694v-39h1v39zM776 694v-29h1v29zM469 694v-32h1v32zM247 694v-34h1v34zM285 694v-33h1v33zM394 694v-30h1v30zM221 694v-27h1v27zM237 694v-35h1v35zM291 694v-31h1v31zM401 694v-32h1v32zM367 694v-30h1v30zM355 694v-21h1v21zM148 694v-18h1v18z" fill="#000" shape-rendering="crispEdges"/>
<path d="M144 694v-14h1v14zM144 680v-19h1v19zM148 685v-8h1v8zM166 684v-15h1v15zM169 680v-6h1v6zM177 694v-18h1v18zM177 676v-9h1v9zM188 694v-13h1v13zM194 683v-7h1v7zM195 683v-8h1v8zM202 694v-8h1v8zM207 650v-0h1v0zM236 694v-24h1v24zM245 694v-18h1v18zM247 665v-20h1v20zM249 680v-12h1v12zM257 649v-9h1v9zM260 658v-21h1v21zM278 665v-13h1v13zM289 694v-37h1v37zM293 694v-29h1v29zM302 667v-15h1v15zM305 694v-40h1v40zM306 694v-33h1v33zM308 694v-32h1v32zM309 694v-38h1v38zM316 694v-27h1v27zM317 694v-25h1v25zM320 694v-15h1v15zM323 694v-6h1v6zM326 678v-6h1v6zM328 694v-17h1v17zM328 677v-19h1v19zM338 686v-13h1v13zM350 694v-6h1v6zM352 685v-13h1v13zM353 683v-6h1v6zM355 686v-8h1v8zM376 668v-10h1v10zM380 694v-30h1v30zM380 664v-6h1v6zM381 694v-30h1v30zM383 686v-5h1v5zM384 686v-12h1v12zM394 669v-16h1v16zM400 672v-9h1v9zM408 694v-22h1v22zM414 665v-20h1v20zM418 694v-8h1v8zM434 673v-18h1v18zM440 694v-8h1v8zM442 659v-18h1v18zM451 654v-11h1v11zM453 694v-25h1v25zM472 678v-21h1v21zM477 652v-20h1v20zM480 694v-25h1v25zM480 669v-8h1v8zM481 694v-30h1v30zM481 664v-6h1v6zM495 668v-18h1v18zM502 671v-11h1v11zM506 694v-38h1v38zM506 656v-12h1v12zM507 694v-53h1v53zM507 641v-5h1v5zM510 668v-7h1v7zM517 660v-10h1v10zM545 694v-34h1v34zM545 660v-21h1v21zM547 661v-10h1v10zM553 677v-20h1v20zM555 694v-22h1v22zM558 659v-20h1v20zM565 683v-5h1v5zM571 694v-13h1v13zM580 673v-12h1v12zM583 678v-20h1v20zM585 667v-18h1v18zM586 663v-13h1v13zM594 656v-17h1v17zM599 694v-37h1v37zM599 657v-9h1v9zM608 694v-28h1v28zM610 694v-22h1v22zM614 694v-6h1v6zM615 694v-8h1v8zM620 694v-19h1v19zM621 694v-20h1v20zM626 694v-37h1v37zM627 694v-29h1v29zM629 661v-6h1v6zM631 671v-10h1v10zM642 670v-13h1v13zM647 694v-10h1v10zM653 694v-31h1v31zM660 694v-17h1v17zM663 669v-19h1v19zM666 694v-39h1v39zM666 655v-13h1v13zM667 694v-33h1v33zM669 694v-44h1v44zM670 694v-42h1v42zM675 673v-20h1v20zM678 674v-5h1v5zM682 659v-14h1v14zM683 643v-5h1v5zM687 679v-15h1v15zM688 681v-8h1v8zM693 694v-39h1v39zM697 694v-46h1v46zM697 648v-7h1v7zM699 694v-32h1v32zM711 694v-36h1v36zM711 658v-14h1v14zM712 694v-23h1v23zM715 694v-13h1v13zM715 681v-16h1v16zM716 694v-15h1v15zM721 662v-7h1v7zM730 694v-25h1v25zM732 659v-20h1v20zM736 674v-18h1v18zM739 648v-10h1v10zM743 694v-13h1v13zM743 681v-18h1v18zM747 673v-14h1v14zM749 664v-11h1v11zM752 694v-23h1v23zM757 669v-10h1v10zM762 654v-7h1v7zM764 694v-10h1v10zM766 694v-10h1v10zM772 694v-31h1v31zM773 694v-42h1v42zM776 694v-40h1v40zM777 694v-36h1v36zM785 694v-42h1v42zM790 694v-25h1v25zM790 669v-9h1v9zM792 654v-4h1v4zM794 694v-14h1v14zM800 694v-33h1v33zM803 694v-25h1v25zM804 694v-20h1v20zM809 656v-8h1v8zM810 653v-14h1v14zM812 678v-5h1v5zM814 694v-24h1v24zM814 670v-11h1v11zM815 694v-35h1v35zM815 659v-6h1v6zM817 678v-20h1v20zM820 694v-21h1v21zM820 673v-16h1v16zM821 694v-21h1v21zM825 694v-43h1v43zM826 694v-58h1v58zM828 694v-35h1v35zM834 644v-8h1v8zM836 683v-22h1v22zM843 657v-12h1v12zM849 694v-24h1v24zM849 670v-6h1v6zM850 694v-24h1v24zM850 670v-18h1v18zM857 646v-7h1v7zM862 694v-53h1v53zM865 694v-54h1v54zM868 658v-17h1v17zM870 694v-21h1v21zM872 651v-6h1v6zM874 649v-17h1v17zM876 694v-41h1v41zM880 694v-7h1v7zM880 687v-18h1v18zM893 657v-18h1v18zM896 694v-12h1v12zM896 682v-6h1v6zM901 645v-11h1v11zM908 694v-51h1v51zM908 643v-10h1v10zM909 694v-38h1v38zM912 694v-37h1v37zM915 678v-5h1v5zM924 694v-29h1v29zM926 694v-21h1v21zM927 694v-31h1v31zM929 678v-18h1v18zM934 657v-10h1v10zM936 663v-14h1v14zM937 670v-5h1v5zM942 694v-71h1v71zM947 667v-14h1v14zM949 629v-15h1v15zM952 648v-14h1v14zM958 694v-30h1v30zM959 694v-39h1v39zM968 694v-15h1v15zM978 694v-15h1v15zM985 694v-19h1v19zM991 667v-13h1v13zM993 694v-21h1v21zM1003 653v-13h1v13zM1012 676v-21h1v21zM1013 671v-18h1v18zM1014 677v-7h1v7zM1019 694v-10h1v10zM1024 645v-13h1v13zM1025 643v-7h1v7zM1026 649v-15h1v15zM1028 665v-17h1v17zM1034 694v-7h1v7zM1036 658v-15h1v15zM1044 651v-19h1v19zM1045 662v-21h1v21zM1048 652v-16h1v16zM1052 658v-17h1v17zM1063 658v-13h1v13zM1064 654v-20h1v20zM1068 694v-12h1v12zM1068 682v-10h1v10zM1077 647v-21h1v21zM1082 694v-55h1v55zM1083 694v-34h1v34zM1083 660v-20h1v20zM1091 667v-17h1v17zM1099 694v-50h1v50zM1099 644v-12h1v12zM1101 694v-33h1v33zM1106 694v-31h1v31zM1106 663v-15h1v15zM1107 694v-40h1v40zM1109 694v-30h1v30zM1116 694v-39h1v39zM1118 678v-4h1v4zM967 694v-86h1v86zM974 694v-91h1v91zM980 694v-67h1v67zM988 694v-72h1v72zM995 694v-72h1v72zM935 694v-72h1v72zM929 694v-64h1v64zM1016 694v-60h1v60zM1030 694v-69h1v69zM1040 694v-64h1v64zM1060 694v-63h1v63zM1096 694v-70h1v70zM843 694v-63h1v63zM860 694v-54h1v54zM504 694v-59h1v59zM519 694v-61h1v61zM545 694v-55h1v55zM634 694v-64h1v64zM672 694v-64h1v64zM624 694v-59h1v59zM776 694v-59h1v59zM469 694v-52h1v52zM247 694v-57h1v57zM285 694v-54h1v54zM394 694v-54h1v54zM221 694v-48h1v48zM237 694v-52h1v52zM291 694v-49h1v49zM401 694v-46h1v46zM367 694v-48h1v48zM355 694v-42h1v42zM148 694v-40h1v40z" fill="#6e6e10" shape-rendering="crispEdges"/>
<path d="M136.5 203V484" stroke="#8c8c20" stroke-width="1"/>
<path d="M136.5 484V694" stroke="#f4f466" stroke-width="1"/>
<g font-family="Liberation Sans, sans-serif" font-size="12.5" font-weight="400" fill="#969696"><text x="141" y="95.2">0.0</text><text x="141" y="157.2">-10.0</text><text x="141" y="219.2">-20.0</text><text x="141" y="281.2">-30.0</text><text x="141" y="343.2">-40.0</text><text x="141" y="405.2">-50.0</text><text x="141" y="467.2">-60.0</text><text x="141" y="529.2" fill="#a6a61c">-70.0</text><text x="141" y="591.2" fill="#a6a61c">-80.0</text><text x="141" y="653.2" fill="#a6a61c">-90.0</text></g>
</svg>
<div class="flab" style="left:136px">起始频率</div><div class="flab l" style="left:249px">0 Hz</div>
<div class="flab" style="left:841px">终止频率</div><div class="flab l" style="right:153.5px">20.100000000 GHz</div>
<div id="bbar"></div>
<div class="bi" style="left:1px;top:727px"><svg width="32" height="30" viewBox="0 0 32 30" stroke="#fff" fill="none" stroke-width="1.6" stroke-linecap="round" stroke-linejoin="round"><path d="M2.8 11.6V3.9H28.2V11.6M2.8 18.6V25.5H28.2V18.6" stroke-linecap="butt" stroke-linejoin="miter"/><path d="M2.4 14.8H6.2L8.4 7.4L11.8 22L15.2 8.4L18.8 21.8L22.4 7.4L24.6 14.8H28.6" stroke-width="1.3"/></svg><span>频率</span></div>
<div class="bi" style="left:103px;top:727px"><svg width="32" height="30" viewBox="0 0 32 30"><path d="M2.1 23.7H29.1V26.8H2.1Z" fill="#fff"/><path d="M8.9 3.9H22L23.5 24H7.4Z" fill="#fff"/><path d="M11.2 24.4L11.7 12.6Q12 9.2 14 9.2H17.4Q19.4 9.2 19.7 12.6L20.2 24.4Z" fill="#09295a"/><path d="M12.2 7.2H19.4" stroke="#0a2f60" stroke-width=".7"/><path d="M15.5 9V24" stroke="#fff" stroke-width="1.5"/></svg><span>扫宽</span></div>
<div class="bi" style="left:205px;top:727px"><svg width="32" height="30" viewBox="0 0 32 30" stroke="#fff" fill="none" stroke-width="1.6" stroke-linecap="round" stroke-linejoin="round"><rect x="2.8" y="3.8" width="25.4" height="21.8" rx="3"/><path d="M6.6 18.6V22.8M10.2 18V22.8M13.9 12.8V22.8M17.4 14V22.8M20.9 9.4V22.8M24.4 6.4V22.8" stroke-width="2" stroke-linecap="butt"/></svg><span>幅度</span></div>
<div class="bi" style="left:307px;top:727px"><svg width="32" height="30" viewBox="0 0 32 30" stroke="#fff" fill="none" stroke-width="1.6" stroke-linecap="round" stroke-linejoin="round"><defs><linearGradient id="bw" x1="0" y1="0" x2="0" y2="1"><stop offset="0" stop-color="#fff"/><stop offset=".5" stop-color="#cfc8c0"/><stop offset="1" stop-color="#7d8796"/></linearGradient></defs><path d="M4.2 23.6V19.4C7.2 19 8 17.6 8.8 13.4C9.6 9.4 10.4 8.8 12.4 8.4L13.4 7.8L14.6 8.4L15.8 7.6L17 8.4L18.2 8C21 8.6 21.6 9.6 22.4 13.4C23.2 17.6 24.2 19 26.8 19.4V23.6Z" fill="url(#bw)" stroke="none"/><rect x="3" y="3.8" width="25" height="21.8" rx="3.4"/></svg><span>带宽</span></div>
<div class="bi" style="left:409px;top:727px"><svg width="32" height="30" viewBox="0 0 32 30" stroke="#fff" fill="none" stroke-width="1.6" stroke-linecap="round" stroke-linejoin="round"><path d="M4.8 4.2V24.4" /><path d="M2.4 25.4Q4.8 27.6 7.2 25.4" stroke-width="1.4"/><path d="M4.8 5H20.2V16.6H4.8" stroke-linejoin="miter"/><path d="M20.2 9H28V20.2H15.4V16.6" stroke-linejoin="miter"/></svg><span>标记</span></div>
<div class="bi" style="left:511px;top:727px"><svg width="32" height="30" viewBox="0 0 32 30" stroke="#fff" fill="none" stroke-width="1.6" stroke-linecap="round" stroke-linejoin="round"><rect x="2.9" y="3.8" width="25.4" height="21.8" rx="3.4"/><path d="M5.2 23.6C9.3 22 10.3 15 12.2 11.5C13.4 9.4 14.6 9 15.8 9C17 9 18.2 9.4 19.4 11.5C21.3 15 22.3 22 26.4 23.6" stroke-width="1.5"/><circle cx="15.8" cy="8.6" r="1.8" fill="#fff" stroke="none"/></svg><span>峰值</span></div>
<div class="bi" style="left:613px;top:727px"><svg width="32" height="30" viewBox="0 0 32 30" stroke="#fff" fill="none" stroke-width="1.6" stroke-linecap="round" stroke-linejoin="round"><defs><linearGradient id="sw" x1="1" y1="0.5" x2="0" y2="0.5"><stop offset="0" stop-color="#445a7c"/><stop offset="1" stop-color="#aab6c8"/></linearGradient></defs><g transform="translate(-1.2 -0.8)"><path d="M16.4 15.9L7.2 7.4A12.6 12.6 0 0 0 7.6 25Z" fill="url(#sw)" stroke="none"/><path d="M11.6 4.2A12.6 12.6 0 1 1 7.2 7.4L16.4 15.9" stroke-width="1.7"/><circle cx="16.6" cy="15.9" r="1.6" fill="#fff" stroke="none"/></g></svg><span>扫描</span></div>
<div class="bi" style="left:715px;top:727px"><svg width="32" height="30" viewBox="0 0 32 30" stroke="#fff" fill="none" stroke-width="1.6" stroke-linecap="round" stroke-linejoin="round"><rect x="3" y="3.8" width="25.4" height="21.8" stroke-linejoin="miter"/><path d="M3.8 22.4H27.6" stroke-width="1.3"/><path d="M4.2 19H12.2L15.2 18L16.4 6.4L17.8 18L20.4 19H27.4" stroke-width="1.1"/><path d="M4.2 20.6H9L16.2 8.2L21.8 17.4H27.4" stroke-width="1" stroke="#dfe6f2"/></svg><span>迹线</span></div>
<div class="bi" style="left:817px;top:727px"><svg width="32" height="30" viewBox="0 0 32 30" stroke="#fff" fill="none" stroke-width="1.6" stroke-linecap="round" stroke-linejoin="round"><path d="M15.8 4L28.2 25.6H3.6Z" stroke-width="1.7"/><path d="M15.8 14V22" stroke-width="1.9" stroke-linecap="butt"/><path d="M15.8 23.2V24.8" stroke-width="1.9" stroke-linecap="butt"/></svg><span>极限</span></div>
<div class="bi" style="left:919px;top:727px"><svg width="32" height="30" viewBox="0 0 32 30" stroke="#fff" fill="none" stroke-width="1.6" stroke-linecap="round" stroke-linejoin="round"><path d="M2.8 18.2L20 3.6" stroke-width="2"/><g transform="rotate(-40 17.9 16.8)"><rect x="6.4" y="12.7" width="23" height="8.2" rx="1.8" stroke-width="2.1"/><path d="M10.6 13.2V16.6M14.4 13.2V16.6M18.2 13.2V16.6M22 13.2V16.6M25.6 13.2V16.6" stroke-width="1.9" stroke-linecap="butt"/></g></svg><span>测量</span></div>
<div class="bi" style="left:1021px;top:727px"><svg width="32" height="30" viewBox="0 0 32 30" stroke="#fff" fill="none" stroke-width="1.6" stroke-linecap="round" stroke-linejoin="round"><path d="M2.2 6.7H8.4M14.6 6.7H28.6M2.2 15H16.2M22.2 15H28.6M2.2 23.5H8.4M14.6 23.5H28.6" stroke-width="1.7"/><circle cx="11.5" cy="6.7" r="3"/><circle cx="19.2" cy="15" r="3"/><circle cx="11.5" cy="23.5" r="3"/></svg><span>配置</span></div>
<svg class="abs" style="left:0;top:715px" width="1280" height="85" viewBox="0 715 1280 85" fill="none">
<path d="M13.5 729V793M1126.5 729V793" stroke="#24508e" stroke-width="1"/>
<g stroke="#3f8ff0" stroke-width="3" opacity=".55"><path d="M27 728.5H13.5V735"/><path d="M27 793.5H13.5V786"/><path d="M1113 728.5H1126.5V735"/><path d="M1113 793.5H1126.5V786"/></g>
<g stroke="#8cc6ff" stroke-width="1.4"><path d="M26 728.5H13.7V734"/><path d="M26 793.3H13.7V787"/><path d="M1114 728.5H1126.3V734"/><path d="M1114 793.3H1126.3V787"/></g>
</svg>
<div id="rtitle">频率</div>
<div class="rb act one" style="top:31px"><i></i>中心频率</div>
<div class="rb one" style="top:108px"><i></i>起始频率</div>
<div class="rb one" style="top:185px"><i></i>终止频率</div>
<div class="rb two" style="top:262px"><i></i><div>步进频率</div><div><span class="cy">自动</span><span style="display:inline-block;width:23px"></span>手动</div></div>
<div class="rb two" style="top:339px"><i></i><div>步进频率</div><div><span style="font-size:18.5px;letter-spacing:.7px">1.000 MHz</span></div></div>
<div class="rb two" style="top:416px"><i></i><div>信号标准</div><div><span style="display:inline-block;transform:scaleX(1.45);letter-spacing:.6px">--</span></div><svg style="position:absolute;left:100px;top:22px" width="20" height="22" viewBox="0 0 20 22" fill="none" stroke="#8a93a3" stroke-width="2.2"><path d="M3 3L16 11L3 19"/></svg></div>
<div class="rb two" style="top:493px"><i></i><div>信道号</div><div><span style="display:inline-block;transform:scaleX(1.45);letter-spacing:.6px">--</span></div></div>
<div class="rb two" style="top:570px"><i></i><div>信号跟踪</div><div><span class="cy">关</span><span style="display:inline-block;width:42px"></span>开</div></div>
<div class="rb " style="top:647px"><i></i></div>
<div class="rb " style="top:724px"><i></i></div>

</body>
</html>
